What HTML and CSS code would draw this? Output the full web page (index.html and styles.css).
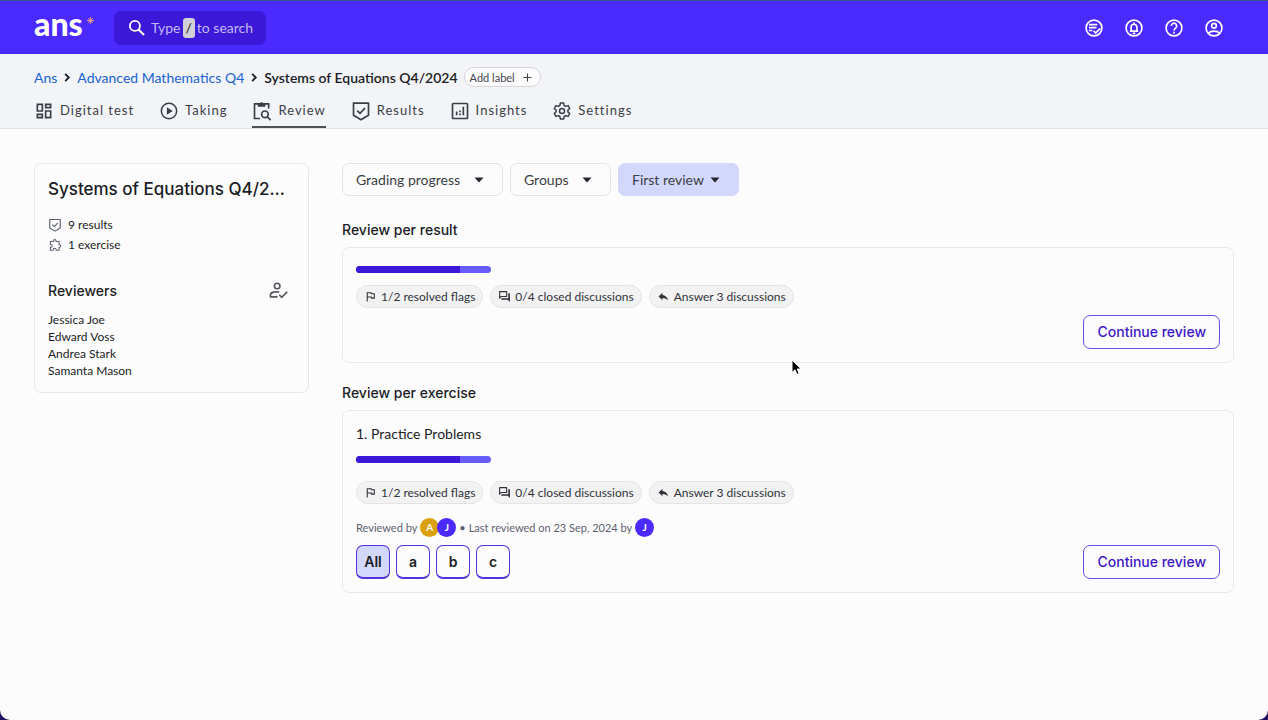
FILE: index.html
```html
<!DOCTYPE html>
<html lang="en">
<head>
<meta charset="utf-8">
<meta name="viewport" content="width=device-width, initial-scale=1">
<title>Systems of Equations Q4/2024 - Review</title>
<link rel="stylesheet" href="styles.css">
</head>
<body>
<svg class="sprite" aria-hidden="true">
  <symbol id="shield" viewBox="0 0 24 24"><path d="M3 2.500h18V17l-9 5.500L3 17z" fill="none" stroke="currentColor" stroke-width="2" stroke-linejoin="round"/><path d="M7.500 11.500l3.300 3.300 6-6.300" fill="none" stroke="currentColor" stroke-width="2"/></symbol>
  <symbol id="flag" viewBox="0 0 24 24"><path fill="currentColor" d="M12.360 6l.4 2H18v6h-3.360l-.4-2H7V6h5.360M14 4H5v17h2v-7h5.600l.4 2h7V6h-5.600L14 4z"/></symbol>
  <symbol id="forum" viewBox="0 0 24 24"><path fill="currentColor" d="M15 4v7H5.170L4 12.170V4h11m1-2H3c-.55 0-1 .45-1 1v14l4-4h10c.55 0 1-.45 1-1V3c0-.55-.45-1-1-1zm5 4h-2v9H6v2c0 .55.450 1 1 1h11l4 4V7c0-.55-.45-1-1-1z"/></symbol>
  <symbol id="reply" viewBox="0 0 24 24"><path fill="currentColor" d="M10 9V5l-7 7 7 7v-4.100c5 0 8.500 1.600 11 5.100-1-5-4-10-11-11z"/></symbol>
  <symbol id="caret" viewBox="0 0 10 6"><path fill="currentColor" d="M.5.500h9L5 5.500z"/></symbol>
  <symbol id="chevron" viewBox="0 0 8 10"><path d="M2 1l4 4-4 4" fill="none" stroke="currentColor" stroke-width="2"/></symbol>
</svg>
<div class="page">
  <header class="topbar">
    <a class="logo" href="#" aria-label="ans home"><span>ans</span><svg class="star" viewBox="0 0 10 10" aria-hidden="true"><path d="M5 1v8M1 5h8M2.200 2.200l5.600 5.600M7.800 2.200L2.200 7.800" stroke="currentColor" stroke-width="1"/></svg></a>
    <label class="search">
      <svg class="search-icon" viewBox="0 0 24 24" aria-hidden="true"><circle cx="9.500" cy="9.500" r="6" fill="none" stroke="currentColor" stroke-width="2.200"/><path d="M14 14l6.500 6.500" stroke="currentColor" stroke-width="2.600"/></svg>
      <span>Type</span><kbd>/</kbd><span>to search</span>
      <input class="search-input" type="search" aria-label="Search">
    </label>
    <nav class="tools" aria-label="Tools">
      <button type="button" aria-label="Tasks"><svg viewBox="0 0 24 24"><circle cx="12" cy="12" r="9.500"/><path d="M6 8h10M6 11.500h9M6 15h4M11.500 15.500l2.500 2.500 5.500-5.500"/></svg></button>
      <button type="button" aria-label="Notifications"><svg viewBox="0 0 24 24"><circle cx="12" cy="12" r="9.500"/><path d="M7 15.800h10M8.500 15.500V11a3.500 3.500 0 0 1 7 0v4.500M12 5.500v2M10.500 18.500h3"/></svg></button>
      <button type="button" aria-label="Help"><svg viewBox="0 0 24 24"><circle cx="12" cy="12" r="9.500"/><path d="M8.800 9.500a3.200 3.200 0 1 1 5 2.600c-1.200.9-1.800 1.400-1.800 2.900M12 16.500v2.200"/></svg></button>
      <button type="button" aria-label="Account"><svg viewBox="0 0 24 24"><circle cx="12" cy="12" r="9.500"/><circle cx="12" cy="9.300" r="2.800"/><path d="M5 18.300c3.500-3.500 10.500-3.500 14 0"/></svg></button>
    </nav>
  </header>

  <div class="subheader">
    <nav class="crumbs" aria-label="Breadcrumb">
      <a href="#">Ans</a>
      <svg class="chevron" aria-hidden="true"><use href="#chevron"/></svg>
      <a href="#">Advanced Mathematics Q4</a>
      <svg class="chevron" aria-hidden="true"><use href="#chevron"/></svg>
      <span class="current">Systems of Equations Q4/2024</span>
      <button class="add-label" type="button">Add label<svg viewBox="0 0 10 10" aria-hidden="true"><path d="M5 .5v9M.5 5h9" stroke="currentColor" stroke-width="1.200"/></svg></button>
    </nav>
    <nav class="tabs" aria-label="Assignment">
      <a href="#"><svg viewBox="0 0 24 24"><path fill="currentColor" d="M19 5v2h-4V5h4M9 5v6H5V5h4m10 8v6h-4v-6h4M9 17v2H5v-2h4M21 3h-8v6h8V3zM11 3H3v10h8V3zm10 8h-8v10h8V11zm-10 4H3v6h8v-6z"/></svg>Digital test</a>
      <a href="#"><svg viewBox="0 0 24 24"><circle cx="12" cy="12" r="9.200" fill="none" stroke="currentColor" stroke-width="1.800"/><path fill="currentColor" d="M9.500 7.500v9l7-4.500z"/></svg>Taking</a>
      <a class="active" href="#" aria-current="page"><svg viewBox="0 0 24 24"><path d="M9.500 21H3V3.500h17V9" fill="none" stroke="currentColor" stroke-width="2"/><path fill="currentColor" d="M7 2.500h2.500a2.500 2.500 0 0 1 4 0H16V7H7z"/><circle cx="15.500" cy="16" r="4" fill="none" stroke="currentColor" stroke-width="2"/><path d="M18.400 19l4 4" stroke="currentColor" stroke-width="2"/></svg>Review</a>
      <a href="#"><svg><use href="#shield"/></svg>Results</a>
      <a href="#"><svg viewBox="0 0 24 24"><rect x="3" y="3" width="18" height="18" rx="1" fill="none" stroke="currentColor" stroke-width="2"/><path d="M8 12.500V17M12 15v2M16 7v10M12 11.500v2" stroke="currentColor" stroke-width="2"/></svg>Insights</a>
      <a href="#"><svg viewBox="0 0 24 24"><path fill="none" stroke="currentColor" stroke-width="1.800" stroke-linejoin="round" d="M10 2.500h4l.6 2.900 1.900 1.100 2.800-1 2 3.500-2.200 1.900v2.200l2.200 1.900-2 3.500-2.800-1-1.900 1.100-.6 2.900h-4l-.6-2.900-1.900-1.100-2.800 1-2-3.500 2.200-1.900v-2.200L2.700 9l2-3.500 2.800 1 1.900-1.100z"/><circle cx="12" cy="12" r="3" fill="none" stroke="currentColor" stroke-width="1.800"/></svg>Settings</a>
    </nav>
  </div>

  <div class="layout">
    <aside class="panel summary">
      <h1 title="Systems of Equations Q4/2024">Systems of Equations Q4/2...</h1>
      <ul class="facts">
        <li><svg><use href="#shield"/></svg>9 results</li>
        <li><svg viewBox="0 0 24 24"><path fill="none" stroke="currentColor" stroke-width="1.800" stroke-linejoin="round" d="M4 6h5.500V5a2.200 2.200 0 0 1 4.400 0v1H19v5.500h.6a2.200 2.200 0 0 1 0 4.400H19V21h-5v-.8a2.500 2.500 0 0 0-5 0v.8H4v-5h.7a2.500 2.500 0 0 0 0-5H4z"/></svg>1 exercise</li>
      </ul>
      <div class="reviewers-head">
        <h2>Reviewers</h2>
        <button type="button" aria-label="Assign reviewers"><svg viewBox="0 0 24 24"><circle cx="11" cy="6" r="3.300"/><path d="M13.500 13.300c-4-1-10.500.3-10.500 3V19h8.500M13.500 16.500l3 3 6.500-6.500"/></svg></button>
      </div>
      <ul class="reviewers">
        <li>Jessica Joe</li>
        <li>Edward Voss</li>
        <li>Andrea Stark</li>
        <li>Samanta Mason</li>
      </ul>
    </aside>

    <main>
      <div class="filters">
        <div class="filter"><select aria-label="Grading progress"><option>Grading progress</option></select><svg><use href="#caret"/></svg></div>
        <div class="filter"><select aria-label="Groups"><option>Groups</option></select><svg><use href="#caret"/></svg></div>
        <div class="filter chosen"><select aria-label="Review round"><option>First review</option></select><svg><use href="#caret"/></svg></div>
      </div>

      <section class="group">
        <h2>Review per result</h2>
        <div class="panel card">
          <div class="meter" role="progressbar" aria-label="Graded" aria-valuenow="77"><span class="done" style="width:77%"></span></div>
          <ul class="chips">
            <li><svg><use href="#flag"/></svg>1/2 resolved flags</li>
            <li><svg><use href="#forum"/></svg>0/4 closed discussions</li>
            <li><svg><use href="#reply"/></svg>Answer 3 discussions</li>
          </ul>
          <div class="actions"><button class="continue" type="button">Continue review</button></div>
        </div>
      </section>

      <section class="group">
        <h2>Review per exercise</h2>
        <div class="panel card exercise">
          <h3>1. Practice Problems</h3>
          <div class="meter" role="progressbar" aria-label="Graded" aria-valuenow="77"><span class="done" style="width:77%"></span></div>
          <ul class="chips">
            <li><svg><use href="#flag"/></svg>1/2 resolved flags</li>
            <li><svg><use href="#forum"/></svg>0/4 closed discussions</li>
            <li><svg><use href="#reply"/></svg>Answer 3 discussions</li>
          </ul>
          <div class="history">
            <span>Reviewed by</span>
            <span class="avatars"><span class="avatar gold">A</span><span class="avatar">J</span></span>
            <span>•</span>
            <span>Last reviewed on 23 Sep, 2024 by</span>
            <span class="avatar">J</span>
          </div>
          <div class="actions">
            <div class="parts">
              <button class="selected" type="button">All</button>
              <button type="button">a</button>
              <button type="button">b</button>
              <button type="button">c</button>
            </div>
            <button class="continue" type="button">Continue review</button>
          </div>
        </div>
      </section>
    </main>
  </div>
</div>
<svg class="pointer" viewBox="0 0 12 17" aria-hidden="true"><path d="M1 1v12.500l3-2.700 2 4.700 2.200-1-2-4.500h4z" fill="#000" stroke="#fff" stroke-width="1"/></svg>
</body>
</html>
```
FILE: styles.css
```css
* {
  box-sizing: border-box;
}

body {
  margin: 0;
  background: #21105f;
  color: #1b1c25;
  font: 12px/17px Lato, "Noto Sans", sans-serif;
}

button,
select,
input {
  font: inherit;
  color: inherit;
}

button {
  padding: 0;
  border: 0;
  background: none;
  cursor: pointer;
}

a {
  color: inherit;
  text-decoration: none;
}

ul {
  margin: 0;
  padding: 0;
  list-style: none;
}

h1,
h2,
h3 {
  margin: 0;
  font-weight: 500;
}

h1,
h2 {
  font-family: Inter, "Noto Sans", sans-serif;
}

.sprite {
  display: none;
}

.page {
  min-height: 100vh;
  overflow: hidden;
  border-radius: 0 0 10px 10px;
  background: #fcfcfc;
}

/* Top bar */
.topbar {
  display: flex;
  align-items: center;
  height: 54px;
  padding: 0 44px 0 34px;
  border-top: 1px solid #30588c;
  background: #4a2aff;
  color: #fff;
}

.logo {
  display: flex;
  gap: 3px;
  width: 80px;
  font-size: 32px;
  font-weight: 900;
  line-height: 36px;
}

.logo span {
  margin-top: -8px;
}

.star {
  width: 9px;
  height: 9px;
  margin-top: 2px;
  color: #f0a08c;
}

.search {
  position: relative;
  display: flex;
  align-items: center;
  gap: 2px;
  height: 34px;
  padding: 0 13px;
  border-radius: 7px;
  background: #3c18d9;
  color: #c3b9f5;
  font-size: 14px;
}

.search-icon {
  width: 20px;
  height: 20px;
  margin-right: 2px;
  color: #fff;
}

.search kbd {
  padding: 0 3px;
  border-radius: 3px;
  background: #d0d0d6;
  color: #222;
  font: 14px/20px Lato, sans-serif;
}

.search-input {
  position: absolute;
  inset: 0;
  width: 100%;
  border: 0;
  opacity: 0;
}

.tools {
  display: flex;
  gap: 20px;
  margin-left: auto;
}

.tools svg {
  display: block;
  width: 20px;
  height: 20px;
  fill: none;
  stroke: #fff;
  stroke-width: 2;
}

/* Breadcrumb and tabs */
.subheader {
  padding: 11px 34px 0;
  border-bottom: 1px solid #e2e3e8;
  background: #f2f4f8;
}

.crumbs {
  display: flex;
  align-items: center;
  gap: 6px;
  height: 24px;
  font-size: 14px;
}

.crumbs a {
  color: #1a63cf;
}

.chevron {
  width: 8px;
  height: 9px;
}

.current {
  font-weight: 600;
}

.add-label {
  display: flex;
  align-items: center;
  gap: 8px;
  height: 20px;
  padding: 0 8px 0 5px;
  border: 1px solid #d6d7dc;
  border-radius: 10px;
  background: #fcfcfc;
  color: #43454d;
  font-size: 11px;
}

.add-label svg {
  width: 9px;
  height: 9px;
}

.tabs {
  display: flex;
  gap: 25px;
  margin-top: 5px;
  color: #3b3e46;
  font-size: 13px;
  letter-spacing: 1px;
}

.tabs a {
  display: flex;
  align-items: center;
  gap: 6px;
  height: 34px;
  padding-top: 1px;
  border-bottom: 2px solid transparent;
}

.tabs .active {
  border-color: #4c4f57;
}

.tabs svg {
  width: 20px;
  height: 20px;
}

/* Content */
.layout {
  display: grid;
  grid-template-columns: 275px 1fr;
  align-items: start;
  gap: 33px;
  padding: 34px 34px 40px;
}

.panel {
  border: 1px solid #e8e8ea;
  border-radius: 7px;
}

.summary {
  padding: 13px 20px 13px 13px;
}

.summary h1 {
  font-size: 17px;
  line-height: 24px;
  white-space: nowrap;
}

.facts {
  display: grid;
  gap: 3px;
  margin-top: 15px;
}

.facts li {
  display: flex;
  align-items: center;
  gap: 6px;
}

.facts svg {
  width: 14px;
  height: 14px;
  color: #5d626c;
}

.reviewers-head {
  display: flex;
  align-items: center;
  justify-content: space-between;
  margin-top: 26px;
}

.reviewers-head svg {
  display: block;
  width: 20px;
  height: 20px;
  fill: none;
  stroke: #55585f;
  stroke-width: 2;
}

h2 {
  font-size: 14px;
  line-height: 24px;
}

.reviewers {
  margin-top: 8px;
}

.filters {
  display: flex;
  gap: 7px;
}

.filter {
  position: relative;
  display: flex;
  border: 1px solid #e4e4e7;
  border-radius: 7px;
  color: #3b3e46;
}

.filter select {
  height: 31px;
  padding: 0 41px 0 13px;
  border: 0;
  background: none;
  font-size: 14px;
  appearance: none;
}

.filter svg {
  position: absolute;
  top: 13px;
  right: 18px;
  width: 10px;
  height: 6px;
  color: #24262d;
  pointer-events: none;
}

.chosen {
  border-color: #d2d7fc;
  background: #d2d7fc;
}

.chosen select {
  padding-right: 34px;
}

.group {
  margin-top: 22px;
}

.group + .group {
  margin-top: 18px;
}

.card {
  margin-top: 5px;
  padding: 18px 13px 13px;
}

.meter {
  width: 135px;
  height: 7px;
  overflow: hidden;
  border-radius: 4px;
  background: #665cff;
}

.done {
  display: block;
  height: 100%;
  background: #3c18d9;
}

.chips {
  display: flex;
  gap: 7px;
  margin-top: 12px;
  color: #30323a;
}

.chips li {
  display: flex;
  align-items: center;
  gap: 4px;
  height: 23px;
  padding: 0 7px;
  border: 1px solid #e4e4e6;
  border-radius: 12px;
  background: #f2f2f3;
}

.chips svg {
  width: 13px;
  height: 13px;
}

.actions {
  display: flex;
  align-items: center;
  margin-top: 7px;
}

.continue {
  height: 34px;
  margin-left: auto;
  padding: 0 13px;
  border: 1px solid #6a4be0;
  border-radius: 7px;
  color: #3c18c8;
  font: 500 14px/20px Inter, sans-serif;
}

.exercise {
  padding-top: 13px;
}

.exercise h3 {
  font-size: 14px;
  font-weight: 400;
  line-height: 20px;
}

.exercise .meter {
  margin-top: 12px;
}

.exercise .chips {
  margin-top: 18px;
}

.exercise .actions {
  margin-top: 8px;
}

.history {
  display: flex;
  align-items: center;
  gap: 3px;
  margin-top: 14px;
  color: #5c6170;
  font-size: 11px;
}

.avatars {
  display: flex;
}

.avatar {
  width: 19px;
  height: 19px;
  border-radius: 50%;
  background: #4a2aff;
  color: #fff;
  font-size: 10px;
  font-weight: 700;
  line-height: 19px;
  text-align: center;
}

.avatar + .avatar {
  margin-left: -2px;
}

.gold {
  background: #dba10b;
}

.parts {
  display: flex;
  gap: 6px;
}

.parts button {
  width: 34px;
  height: 34px;
  border: 1px solid #5230dc;
  border-bottom-width: 2px;
  border-radius: 7px;
  font: 600 14px/20px Inter, sans-serif;
}

.parts .selected {
  background: #d2d7fc;
}

.pointer {
  position: absolute;
  top: 359px;
  left: 791px;
  width: 12px;
  height: 17px;
}
```
